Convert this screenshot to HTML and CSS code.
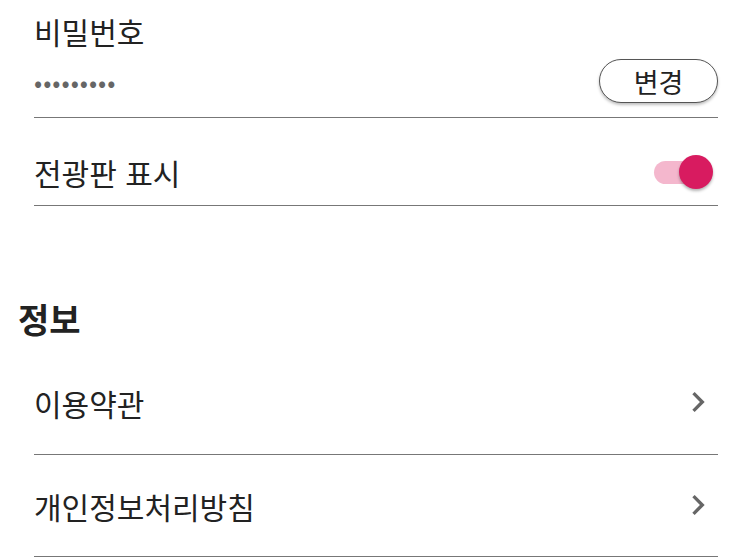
FILE: index.html
```html
<!DOCTYPE html>
<html lang="ko">

<head>
    <meta charset="UTF-8">
    <title>설정</title>
    <meta name="viewport" content="width=device-width, initial-scale=1">
    <link rel="stylesheet" href="styles.css">
</head>

<body>
    <div class="settings">
        <div class="row row-password">
            <div class="password-info">
                <div class="label">비밀번호</div>
                <div class="dots">•••••••••</div>
            </div>
            <button class="change-button">변경</button>
        </div>

        <div class="row row-toggle">
            <div class="label">전광판 표시</div>
            <div class="switch">
                <span class="switch-track"></span>
                <span class="switch-thumb"></span>
            </div>
        </div>

        <h2 class="section-title">정보</h2>

        <div class="row row-link">
            <div class="label">이용약관</div>
            <svg class="chevron" viewBox="0 0 24 24"><path d="M10 6L8.59 7.41 13.17 12l-4.58 4.59L10 18l6-6z"/></svg>
        </div>

        <div class="row row-link row-last">
            <div class="label">개인정보처리방침</div>
            <svg class="chevron" viewBox="0 0 24 24"><path d="M10 6L8.59 7.41 13.17 12l-4.58 4.59L10 18l6-6z"/></svg>
        </div>
    </div>
</body>

</html>
```

FILE: styles.css
```css
body {
    margin: 0;
    background: #fff;
    font-family: "Noto Sans CJK KR", "Noto Sans", sans-serif;
    color: #222;
}

.settings {
    padding: 0 34px 0 34px;
}

.row {
    display: flex;
    align-items: center;
    justify-content: space-between;
    border-bottom: 1px solid #777;
}

.label {
    font-size: 30px;
    line-height: 1;
}

.row-password {
    height: 117px;
    align-items: flex-start;
}

.password-info {
    padding-top: 16px;
}

.dots {
    margin-top: 24px;
    font-size: 24px;
    letter-spacing: 1px;
    color: #666;
    line-height: 1;
}

.change-button {
    margin-top: 59px;
    width: 119px;
    height: 44px;
    border: 1px solid #555;
    border-radius: 22px;
    background: #fff;
    font-family: inherit;
    font-size: 27px;
    color: #222;
    box-shadow: 0 2px 3px rgba(0, 0, 0, 0.25);
    padding: 0;
}

.row-toggle {
    height: 88px;
    padding-top: 24px;
    box-sizing: border-box;
    align-items: flex-start;
}

.row-toggle .label {
    padding-top: 15px;
}

.switch {
    position: relative;
    width: 59px;
    height: 34px;
    margin-top: 13px;
    margin-right: 5px;
}

.switch-track {
    position: absolute;
    left: 0;
    top: 6px;
    width: 54px;
    height: 23px;
    border-radius: 12px;
    background: #f4b7cd;
}

.switch-thumb {
    position: absolute;
    right: 0;
    top: 0;
    width: 34px;
    height: 34px;
    border-radius: 50%;
    background: #d81b60;
    box-shadow: 0 2px 3px rgba(0, 0, 0, 0.3);
}

.section-title {
    margin: 0 0 0 -16px;
    padding-top: 96px;
    height: 50px;
    font-size: 34px;
    font-weight: bold;
    line-height: 1;
    color: #222;
}

.row-link {
    height: 103px;
    padding-top: 36px;
    box-sizing: border-box;
    align-items: flex-start;
}

.row-last {
    height: 102px;
    padding-top: 36px;
}

.chevron {
    width: 40px;
    height: 40px;
    fill: #666;
    margin-top: -6px;
}
```
